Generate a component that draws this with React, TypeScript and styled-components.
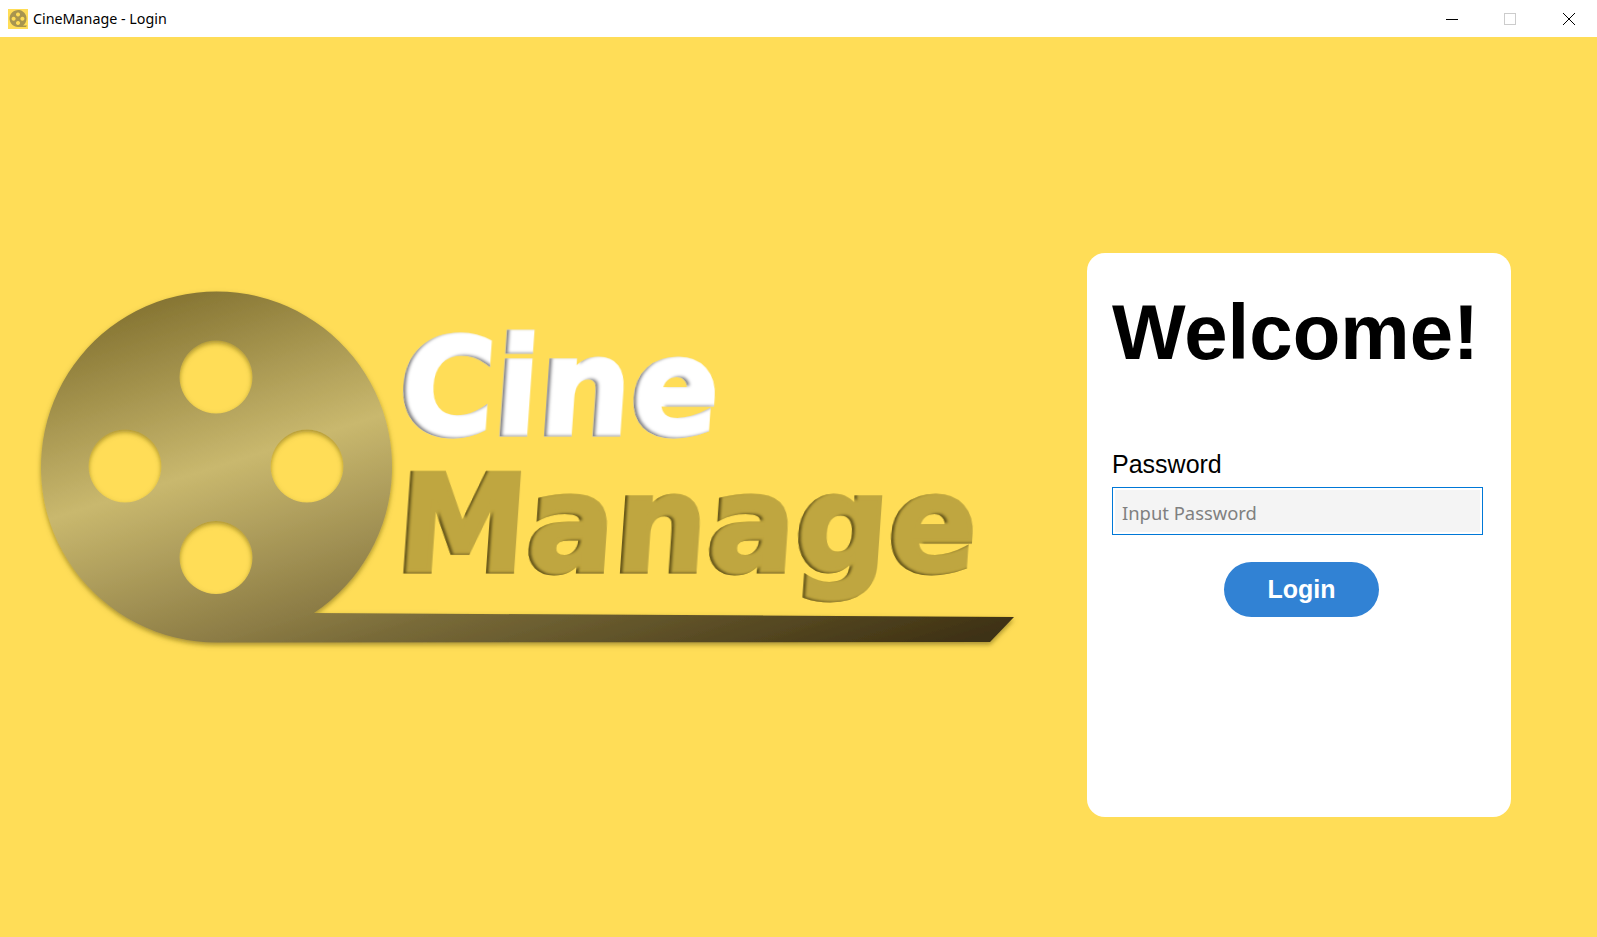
import styled, { createGlobalStyle } from "styled-components";

const GlobalStyle = createGlobalStyle`
  html, body {
    margin: 0;
    padding: 0;
    background: #ffdd57;
  }
  * {
    box-sizing: border-box;
  }
`;

const App = () => {
  return (
    <Window>
      <GlobalStyle />
      <TitleBar>
        <TitleLeft>
          <AppIcon viewBox="0 0 20 20">
            <rect width="20" height="20" fill="#ffdd57" />
            <path
              fillRule="evenodd"
              fill="#a8954f"
              d="M10 18A8.5 8.5 0 1 1 15 16.4L19 16.6L18 18ZM10 3.5a2 2 0 1 0 .01 0ZM5.6 7.7a2 2 0 1 0 .01 0ZM14.4 7.7a2 2 0 1 0 .01 0ZM10 12a2 2 0 1 0 .01 0Z"
            />
          </AppIcon>
          <WindowTitle>CineManage - Login</WindowTitle>
        </TitleLeft>
        <WindowControls>
          <ControlButton>
            <svg width="12" height="12" viewBox="0 0 12 12">
              <path d="M0 6.5H12" stroke="#000" strokeWidth="1" />
            </svg>
          </ControlButton>
          <ControlButton>
            <svg width="12" height="12" viewBox="0 0 12 12">
              <rect x="0.5" y="0.5" width="11" height="11" fill="none" stroke="#ccc" />
            </svg>
          </ControlButton>
          <ControlButton>
            <svg width="12" height="12" viewBox="0 0 12 12">
              <path d="M0 0L12 12M12 0L0 12" stroke="#000" strokeWidth="1" />
            </svg>
          </ControlButton>
        </WindowControls>
      </TitleBar>
      <Main>
        <Logo viewBox="30 285 1000 380">
          <defs>
            <linearGradient id="reelGold" gradientUnits="userSpaceOnUse" x1="150" y1="300" x2="322" y2="846">
              <stop offset="0" stopColor="#857432" />
              <stop offset="0.313" stopColor="#c9b86e" />
              <stop offset="0.6" stopColor="#8c7c45" />
              <stop offset="0.68" stopColor="#786a38" />
              <stop offset="1" stopColor="#3d3012" />
            </linearGradient>
            <filter id="reelShadow" x="-5%" y="-5%" width="110%" height="115%">
              <feDropShadow dx="0" dy="2.5" stdDeviation="2.4" floodColor="#6b5a14" floodOpacity="0.6" />
            </filter>
            <filter id="cineInner" x="-5%" y="-5%" width="110%" height="110%">
              <feComponentTransfer in="SourceAlpha" result="inv">
                <feFuncA type="table" tableValues="1 0" />
              </feComponentTransfer>
              <feOffset in="inv" dx="3" dy="-1" />
              <feGaussianBlur stdDeviation="1.4" result="off" />
              <feFlood floodColor="#55555f" floodOpacity="0.85" />
              <feComposite in2="off" operator="in" />
              <feComposite in2="SourceAlpha" operator="in" result="inner" />
              <feMerge>
                <feMergeNode in="SourceGraphic" />
                <feMergeNode in="inner" />
              </feMerge>
            </filter>
            <filter id="manageInner" x="-5%" y="-5%" width="110%" height="110%">
              <feComponentTransfer in="SourceAlpha" result="inv">
                <feFuncA type="table" tableValues="1 0" />
              </feComponentTransfer>
              <feOffset in="inv" dx="3" dy="-1" />
              <feGaussianBlur stdDeviation="1.1" result="off" />
              <feFlood floodColor="#4d4012" floodOpacity="0.85" />
              <feComposite in2="off" operator="in" />
              <feComposite in2="SourceAlpha" operator="in" result="inner" />
              <feMerge>
                <feMergeNode in="SourceGraphic" />
                <feMergeNode in="inner" />
              </feMerge>
            </filter>
          </defs>
          <path
            fill="url(#reelGold)"
            fillRule="evenodd"
            filter="url(#reelShadow)"
            d="M216.5 642.5A175.5 175.5 0 1 1 313.9 613L1014 617L990 642Z
               M216 340.5a36.5 36.5 0 1 0 .01 0Z
               M125 429.5a36.5 36.5 0 1 0 .01 0Z
               M307 429.5a36.5 36.5 0 1 0 .01 0Z
               M216 521a36.5 36.5 0 1 0 .01 0Z"
          />
          <LogoCine x="0" y="0" transform="translate(396 434) skewX(-4)" textLength="320" lengthAdjust="spacingAndGlyphs" filter="url(#cineInner)">
            Cine
          </LogoCine>
          <LogoManage x="0" y="0" transform="translate(394 571) skewX(-4)" textLength="580" lengthAdjust="spacingAndGlyphs" filter="url(#manageInner)">
            Manage
          </LogoManage>
        </Logo>
        <LoginCard>
          <Heading>Welcome!</Heading>
          <FieldLabel htmlFor="password">Password</FieldLabel>
          <PasswordInput id="password" type="password" placeholder="Input Password" />
          <LoginButton>Login</LoginButton>
        </LoginCard>
      </Main>
    </Window>
  );
};

const Window = styled.div`
  width: 1597px;
  height: 937px;
  display: flex;
  flex-direction: column;
  overflow: hidden;
  background: #ffdd57;
`;

const TitleBar = styled.header`
  height: 37px;
  background: #fff;
  display: flex;
  align-items: center;
  justify-content: space-between;
`;

const TitleLeft = styled.div`
  display: flex;
  align-items: center;
  gap: 5px;
  padding-left: 8px;
`;

const AppIcon = styled.svg`
  width: 20px;
  height: 20px;
`;

const WindowTitle = styled.span`
  font-family: "Noto Sans", sans-serif;
  font-size: 14.3px;
  color: #000;
`;

const WindowControls = styled.div`
  display: flex;
  height: 100%;
  margin-right: -1px;
`;

const ControlButton = styled.div`
  width: 58.5px;
  display: flex;
  align-items: center;
  justify-content: center;
`;

const Main = styled.main`
  flex: 1;
  display: flex;
  align-items: flex-start;
  justify-content: space-between;
  padding: 216px 86px 0 30px;
`;

const Logo = styled.svg`
  width: 1000px;
  height: 380px;
  margin-top: 32px;
  flex: none;
`;

const LogoCine = styled.text`
  font-family: "DejaVu Sans", sans-serif;
  font-weight: 700;
  font-size: 134px;
  fill: #fff;
  stroke: #fff;
  stroke-width: 5px;
`;

const LogoManage = styled.text`
  font-family: "DejaVu Sans", sans-serif;
  font-weight: 700;
  font-size: 134px;
  fill: #bfa640;
  stroke: #bfa640;
  stroke-width: 5px;
`;

const LoginCard = styled.section`
  width: 424px;
  height: 564px;
  background: #fff;
  border-radius: 18px;
  padding: 34px 25px 0;
  display: flex;
  flex-direction: column;
  font-family: "Liberation Sans", Arial, sans-serif;
`;

const Heading = styled.h1`
  margin: 0 0 73px;
  font-size: 78px;
  line-height: 90px;
  font-weight: 700;
  color: #000;
`;

const FieldLabel = styled.label`
  font-size: 25px;
  line-height: 29px;
  color: #000;
  margin-bottom: 8px;
`;

const PasswordInput = styled.input`
  width: 371px;
  height: 48px;
  border: 1px solid #0078d7;
  border-radius: 0;
  outline: none;
  box-shadow: inset 0 0 0 2px #fff;
  background: #f4f4f4;
  padding: 2px 9px 0;
  font-family: "Noto Sans", sans-serif;
  font-size: 18.4px;

  &::placeholder {
    color: #808080;
    opacity: 1;
  }
`;

const LoginButton = styled.button`
  align-self: flex-start;
  width: 155px;
  height: 55px;
  margin: 27px 0 0 112px;
  border: none;
  border-radius: 28px;
  background: #3182d4;
  color: #fff;
  font-family: "Liberation Sans", Arial, sans-serif;
  font-weight: 700;
  font-size: 25px;
`;

export default App;
